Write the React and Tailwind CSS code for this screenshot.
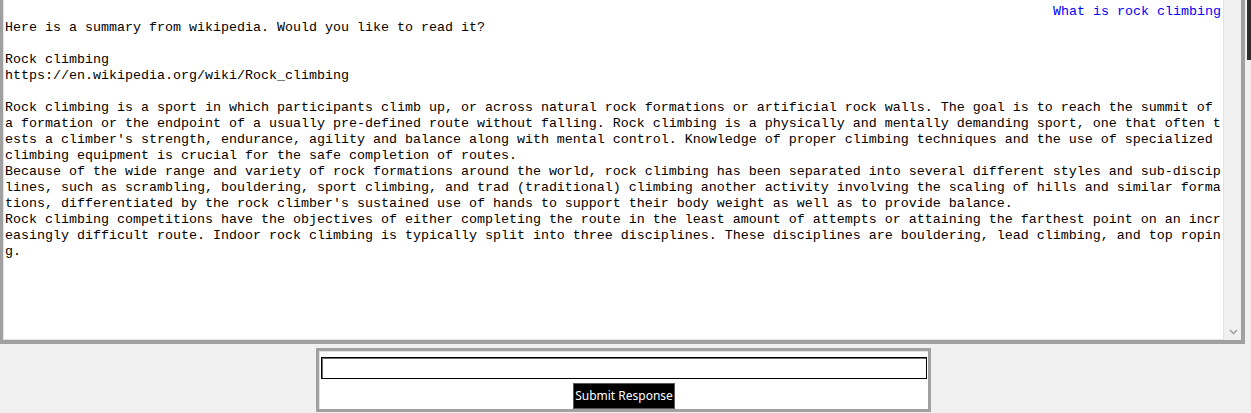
import React from 'react';

const WIDTH = 152;

const paragraphs = [
  "Rock climbing is a sport in which participants climb up, or across natural rock formations or artificial rock walls. The goal is to reach the summit of a formation or the endpoint of a usually pre-defined route without falling. Rock climbing is a physically and mentally demanding sport, one that often tests a climber's strength, endurance, agility and balance along with mental control. Knowledge of proper climbing techniques and the use of specialized climbing equipment is crucial for the safe completion of routes.",
  "Because of the wide range and variety of rock formations around the world, rock climbing has been separated into several different styles and sub-disciplines, such as scrambling, bouldering, sport climbing, and trad (traditional) climbing another activity involving the scaling of hills and similar formations, differentiated by the rock climber's sustained use of hands to support their body weight as well as to provide balance.",
  "Rock climbing competitions have the objectives of either completing the route in the least amount of attempts or attaining the farthest point on an increasingly difficult route. Indoor rock climbing is typically split into three disciplines. These disciplines are bouldering, lead climbing, and top roping.",
];

// char wrap like the text widget does
const wrap = (s) => {
  const out = [];
  for (let i = 0; i < s.length; i += WIDTH) out.push(s.slice(i, i + WIDTH));
  return out;
};

const lines = [
  "Here is a summary from wikipedia. Would you like to read it?",
  "",
  "Rock climbing",
  "https://en.wikipedia.org/wiki/Rock_climbing",
  "",
  ...paragraphs.flatMap(wrap),
];

const App = () => {
  return (
    <div className="w-[1251px] h-[413px] overflow-hidden bg-[#f0f0f0] flex flex-col">
      <div className="flex">
        {/* Chat frame */}
        <div className="w-[1245px] h-[344px] flex border-l-[3px] border-r-[4px] border-b-[4px] border-[#a0a0a0]">
          <div className="w-[1221px] h-[340px] bg-white border-l border-r border-b border-[#e3e3e3] pl-[1px] pr-[2px] pt-[4px] font-['Liberation_Mono','Courier_New',monospace] text-[13.333px] leading-[16px] text-black">
            <div className="h-[16px] text-right text-[#0000ff] whitespace-pre">What is rock climbing</div>
            {lines.map((line, i) => (
              <div key={i} className="h-[16px] whitespace-pre">{line}</div>
            ))}
          </div>
          <div className="w-[17px] h-[340px] bg-[#f0f0f0] flex flex-col justify-end items-center pb-[5px]">
            <svg width="9" height="6" viewBox="0 0 9 6" className="ml-[1px]">
              <polyline points="1,1 4.5,4.5 8,1" fill="none" stroke="#a3a3a3" strokeWidth="1.6" />
            </svg>
          </div>
        </div>
        <div className="w-[6px] flex pl-[2px]">
          <div className="w-[4px] h-[60px] bg-[#2e2e2e]" />
        </div>
      </div>

      {/* Response box */}
      <div className="ml-[316px] mt-[4px] w-[615px] h-[64px] border-[3px] border-[#a0a0a0] bg-white">
        <div className="h-full border-l border-t border-[#e3e3e3] flex flex-col items-center pt-[5px] gap-[4px]">
          <input
            type="text"
            className="w-[606px] h-[22px] border border-black bg-white shadow-[inset_1px_1px_0_#6d6d6d] outline-none"
          />
          <button className="w-[102px] h-[26px] bg-black border border-[#5a5a5a] text-white font-['Noto_Sans','Open_Sans',sans-serif] text-[12px] leading-none">
            Submit Response
          </button>
        </div>
      </div>
    </div>
  );
};

export default App;
